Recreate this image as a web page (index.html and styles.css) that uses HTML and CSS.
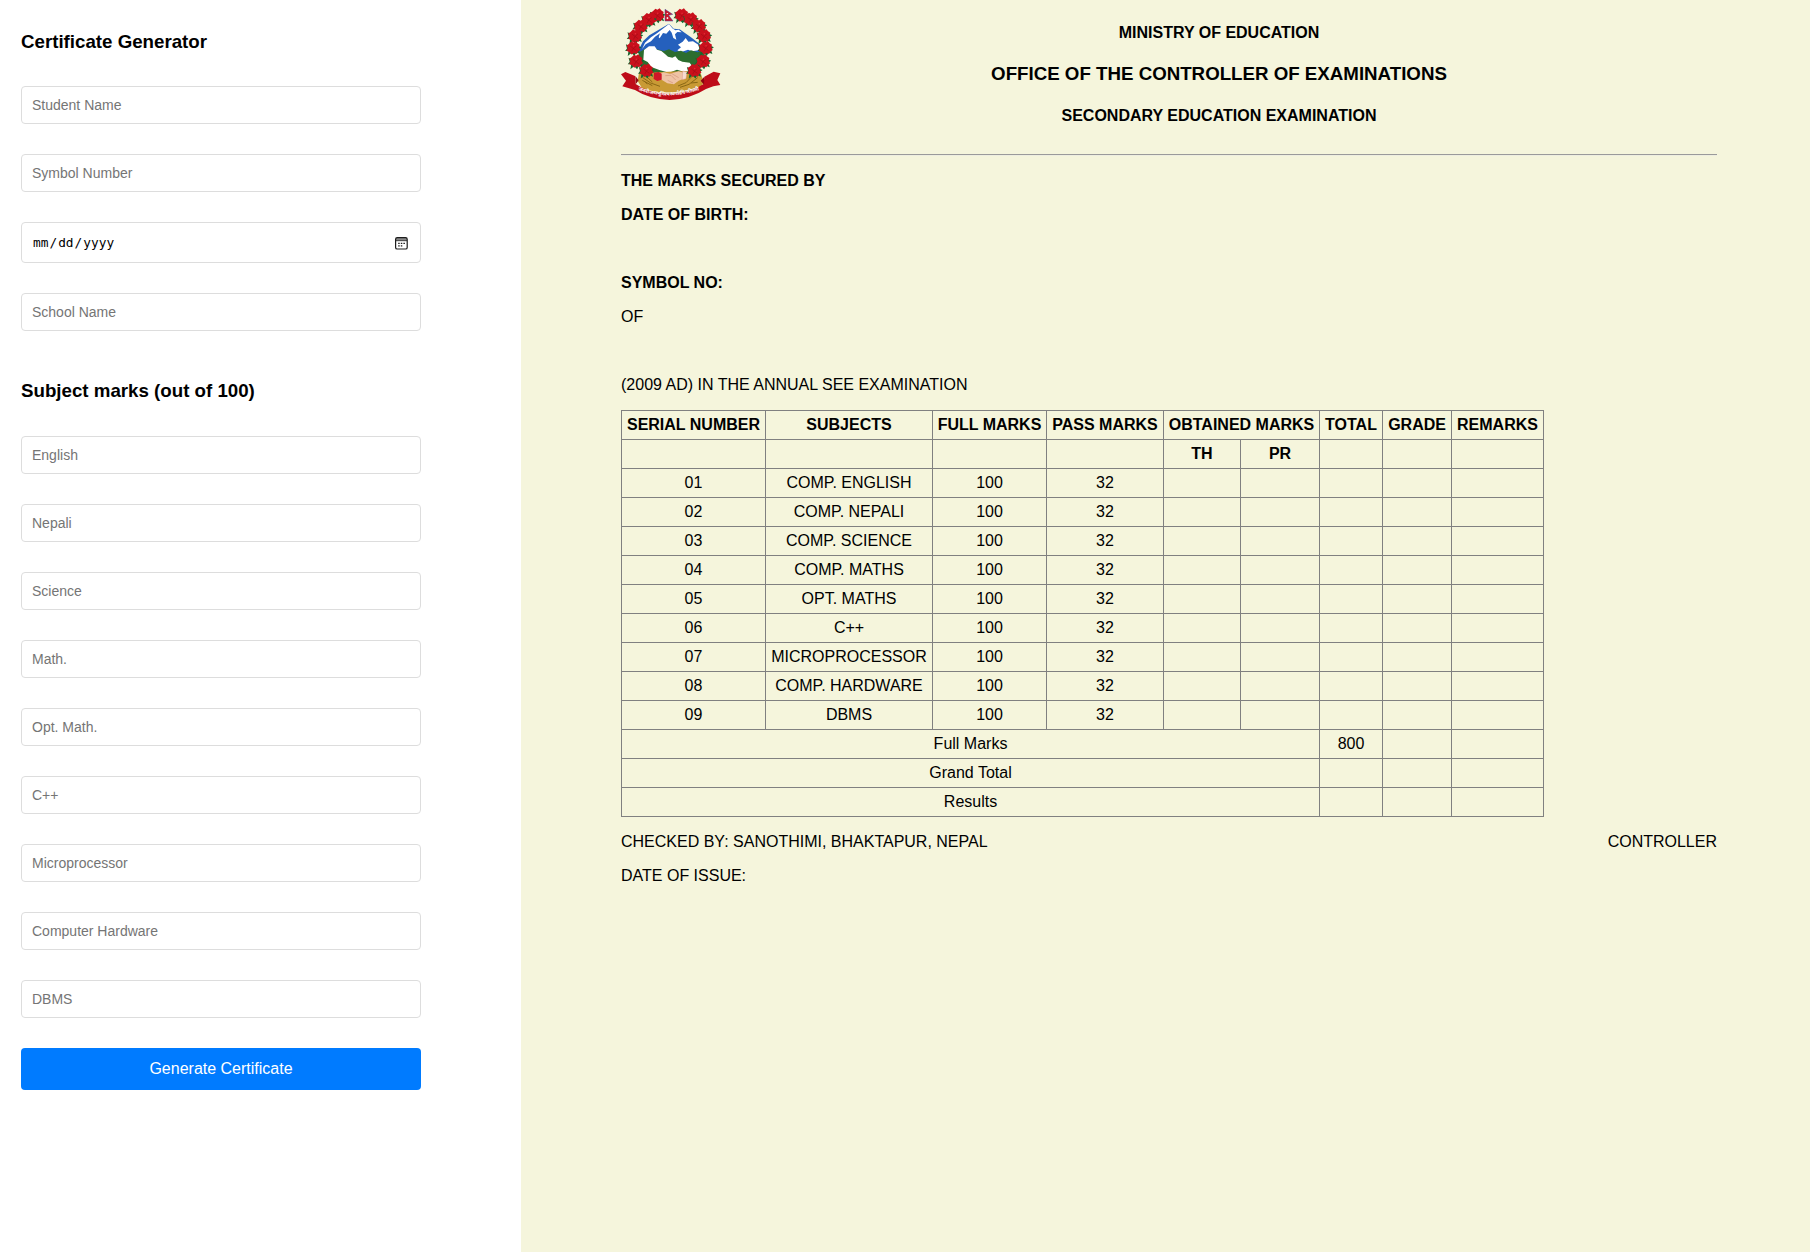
FILE: index.html
```html
<!DOCTYPE html>
<html lang="en">
<head>
<meta charset="utf-8">
<title>Certificate Generator</title>
<link rel="stylesheet" href="styles.css">
</head>
<body>
<div class="page">
  <form class="form">
    <h3>Certificate Generator</h3>
    <div class="fields">
      <input type="text" placeholder="Student Name">
      <input type="text" placeholder="Symbol Number">
      <div class="date-field">
        <input type="date" class="date">
        <svg class="calendar" viewBox="0 0 13 13" aria-hidden="true">
          <path fill="#888" d="M1 1H12V3.6H1Z"/>
          <rect x=".6" y=".6" width="11.6" height="11.4" rx="1.6" fill="none" stroke="#1c1c1c" stroke-width="1.2"/>
          <path stroke="#1c1c1c" stroke-width=".8" d="M1 3.7H12"/>
          <path fill="#1c1c1c" d="M3.2 5.7H4.7V7.1H3.2ZM5.8 5.7H7.3V7.1H5.8ZM8.4 5.7H9.9V7.1H8.4ZM3.2 8.2H4.7V9.6H3.2ZM5.8 8.2H7.3V9.6H5.8Z"/>
        </svg>
      </div>
      <input type="text" placeholder="School Name">
    </div>
    <h3 class="subjects-title">Subject marks (out of 100)</h3>
    <div class="fields">
      <input type="text" placeholder="English">
      <input type="text" placeholder="Nepali">
      <input type="text" placeholder="Science">
      <input type="text" placeholder="Math.">
      <input type="text" placeholder="Opt. Math.">
      <input type="text" placeholder="C++">
      <input type="text" placeholder="Microprocessor">
      <input type="text" placeholder="Computer Hardware">
      <input type="text" placeholder="DBMS">
      <button type="button">Generate Certificate</button>
    </div>
  </form>
  <main class="certificate">
    <header class="head">
      <svg class="emblem" viewBox="34 22 300 276" aria-label="Emblem of Nepal">
        <defs>
          <g id="flower">
            <g transform="scale(1.12)">
              <path fill="#17652f" d="M-9-4-20-9-17 2-22 9-13 9-15 22-5 14 3 22 8 13 18 17 14 5 22-1 13-5Z"/>
              <path fill="#c9101c" d="M-5-17 0-14 6-18 11-12 17-8 15-1 19 6 13 10 9 17 2 14-5 18-10 12-18 8-15 1-18-6-12-10Z"/>
              <path fill="none" stroke="#9c0a16" stroke-width="1.5" d="M-8-4 0 2 8-5M0 2-4 10M0 2 8 8"/>
              <circle r="2" cx="1" cy="-5" fill="#e22c37"/>
            </g>
          </g>
          <path id="motto" d="M86 269Q178 302 280 264"/>
        </defs>
        <path fill="#2560bd" d="M86 150 100 122 119 104 146 88 178 69 192 84 210 86 246 111 270 130 282 160 260 190H100Z"/>
        <path fill="#fff" d="M178 70 188 83 197 89 207 87 216 95 203 94 196 101 200 117 191 112 186 96 180 88 170 99 160 97 150 113 147 110 151 98 136 108 124 122 108 131 97 146 106 126 124 110 144 96ZM205 132 219 123 228 112 236 123 250 122 266 132 272 148 247 152 235 147 213 155 203 149 214 140Z"/>
        <path fill="#2c6d2f" d="M88 155 116 140 137 145 163 151 178 146 196 154 214 150 229 157 244 149 264 155 284 145 286 176 271 205 243 219 120 222 98 208 85 181Z"/>
        <path fill="#fff" d="M103 148 118 137 135 137 142 147 155 151 166 160 175 168 188 171 197 167 206 178 218 183 240 186 251 201 246 218 224 214 202 207 178 216 149 208 125 199 114 184 101 177Z"/>
        <path fill="#c99a35" d="M88 216Q118 220 139 215L229 211 272 215 282 243 272 266 180 288 100 267 84 241Z"/>
        <path fill="none" stroke="#8a6815" stroke-width="3" d="M98 230 123 247 151 257M98 239 128 255M112 229 128 244M248 226 229 246 205 256M264 231 238 251 211 260M244 247 264 245M113 250 105 243"/>
        <path fill="#efc3a5" d="M144 220 162 215 181 219 207 212 224 217 226 233 207 240 193 251 173 248 157 238 143 237Z"/>
        <path fill="none" stroke="#cb866e" stroke-width="1.6" d="M167 225 184 224 198 238M174 239 190 247M185 218 207 231"/>
        <path fill="#cf1727" d="M133 216 147 214 156 219 156 237 143 241 132 235Z"/>
        <path fill="#f6dcd0" stroke="#d6827f" d="M219 211 232 214 229 234 218 237Z"/>
        <path fill="#be0c19" d="M34 221 47 214 76 226 78 250Q113 276 180 280 248 274 282 250L284 228 312 213 332 218 323 238 332 253 311 257 289 265Q242 295 180 298 118 295 76 268L38 257 49 240Z"/>
        <path fill="#8d0510" d="M77 226 87 239 78 251ZM284 228 273 240 283 252Z"/>
        <path fill="#c91a2c" stroke="#3a4a9c" stroke-width="1.5" d="M166 26 189 41 177 44 190 61H166Z"/>
        <path fill="#fff" d="M170 37H176L173 41ZM170 52 173 49 177 52 173 56Z"/>
        <use href="#flower" x="143" y="43"/>
        <use href="#flower" x="117" y="56"/>
        <use href="#flower" x="93" y="76"/>
        <use href="#flower" x="76" y="105"/>
        <use href="#flower" x="71" y="141"/>
        <use href="#flower" x="79" y="181"/>
        <use href="#flower" x="110" y="209"/>
        <use href="#flower" x="216" y="43"/>
        <use href="#flower" x="243" y="55"/>
        <use href="#flower" x="268" y="75"/>
        <use href="#flower" x="283" y="105"/>
        <use href="#flower" x="288" y="141"/>
        <use href="#flower" x="280" y="181"/>
        <use href="#flower" x="254" y="209"/>
        <text class="motto"><textPath href="#motto" textLength="186">जननी जन्मभूमिश्च स्वर्गादपि गरीयसी</textPath></text>
      </svg>
      <div class="titles">
        <h4>MINISTRY OF EDUCATION</h4>
        <h3>OFFICE OF THE CONTROLLER OF EXAMINATIONS</h3>
        <h4>SECONDARY EDUCATION EXAMINATION</h4>
      </div>
    </header>
    <hr>
    <section class="details">
      <p><b>THE MARKS SECURED BY</b></p>
      <p><b>DATE OF BIRTH:</b></p>
      <p></p>
      <p><b>SYMBOL NO:</b></p>
      <p>OF</p>
      <p></p>
      <p>(2009 AD) IN THE ANNUAL SEE EXAMINATION</p>
    </section>
    <table>
      <colgroup><col class="c-serial"><col class="c-subject"><col class="c-full"><col class="c-pass"><col class="c-th"><col class="c-pr"><col class="c-total"><col class="c-grade"><col class="c-remarks"></colgroup>
      <tr><th>SERIAL NUMBER</th><th>SUBJECTS</th><th>FULL MARKS</th><th>PASS MARKS</th><th colspan="2">OBTAINED MARKS</th><th>TOTAL</th><th>GRADE</th><th>REMARKS</th></tr>
      <tr><th></th><th></th><th></th><th></th><th>TH</th><th>PR</th><th></th><th></th><th></th></tr>
      <tr><td>01</td><td>COMP. ENGLISH</td><td>100</td><td>32</td><td></td><td></td><td></td><td></td><td></td></tr>
      <tr><td>02</td><td>COMP. NEPALI</td><td>100</td><td>32</td><td></td><td></td><td></td><td></td><td></td></tr>
      <tr><td>03</td><td>COMP. SCIENCE</td><td>100</td><td>32</td><td></td><td></td><td></td><td></td><td></td></tr>
      <tr><td>04</td><td>COMP. MATHS</td><td>100</td><td>32</td><td></td><td></td><td></td><td></td><td></td></tr>
      <tr><td>05</td><td>OPT. MATHS</td><td>100</td><td>32</td><td></td><td></td><td></td><td></td><td></td></tr>
      <tr><td>06</td><td>C++</td><td>100</td><td>32</td><td></td><td></td><td></td><td></td><td></td></tr>
      <tr><td>07</td><td>MICROPROCESSOR</td><td>100</td><td>32</td><td></td><td></td><td></td><td></td><td></td></tr>
      <tr><td>08</td><td>COMP. HARDWARE</td><td>100</td><td>32</td><td></td><td></td><td></td><td></td><td></td></tr>
      <tr><td>09</td><td>DBMS</td><td>100</td><td>32</td><td></td><td></td><td></td><td></td><td></td></tr>
      <tr><td colspan="6">Full Marks</td><td>800</td><td></td><td></td></tr>
      <tr><td colspan="6">Grand Total</td><td></td><td></td><td></td></tr>
      <tr><td colspan="6">Results</td><td></td><td></td><td></td></tr>
    </table>
    <footer class="sign">
      <p>CHECKED BY: SANOTHIMI, BHAKTAPUR, NEPAL</p>
      <p>CONTROLLER</p>
    </footer>
    <p>DATE OF ISSUE:</p>
  </main>
</div>
</body>
</html>
```
FILE: styles.css
```css
* { box-sizing: border-box; }

body {
  margin: 0;
  background: #fff;
  color: #000;
  font: 16px/18px "Liberation Sans", Arial, sans-serif;
}

.page { display: flex; height: 1252px; }

.form { width: 521px; padding: 31px 100px 0 21px; }

h3, h4, p { margin: 0; }
h3 { font-size: 18.72px; line-height: 21px; }
h4 { font-size: 16px; line-height: 18px; }

.fields { display: flex; flex-direction: column; gap: 30px; margin-top: 34px; }
.subjects-title { margin-top: 49px; }
.subjects-title + .fields { margin-top: 35px; }

input {
  display: block;
  width: 100%;
  height: 38px;
  margin: 0;
  padding: 10px;
  border: 1px solid #ddd;
  border-radius: 4px;
  background: #fff;
  color: #000;
  font: 14px "Liberation Sans", Arial, sans-serif;
}
input::placeholder { color: #757575; }

.date-field { position: relative; }
.date { height: 41px; font: 12.8px "DejaVu Sans Mono", monospace; }
.date::-webkit-calendar-picker-indicator { opacity: 0; }
.calendar { position: absolute; top: 15px; right: 13px; width: 13px; height: 13px; pointer-events: none; }

button {
  height: 42px;
  padding: 0;
  border: 0;
  border-radius: 4px;
  background: #007bff;
  color: #fff;
  font: 16px "Liberation Sans", Arial, sans-serif;
}

.certificate { flex: 1; padding: 8px 93px 0 100px; background: #f5f5dc; }

.head { display: flex; height: 146px; }
.emblem { width: 100px; height: 92px; flex: none; }
.titles { flex: 1; display: flex; flex-direction: column; padding-top: 16px; text-align: center; }
.titles h3 { margin: 21px 0 23px; }
.motto { fill: #fff; font: bold 15px "Noto Sans", sans-serif; }

hr { height: 2px; margin: 0 0 16px; border: 0; border-top: 1px solid #9a9a9a; border-bottom: 1px solid #eeeee0; }

.details p { height: 18px; margin-bottom: 16px; }

table { width: 923px; table-layout: fixed; border-collapse: collapse; }
th, td { height: 29px; padding: 0; border: 1px solid #808080; text-align: center; white-space: nowrap; }
.c-serial { width: 144px; }
.c-subject { width: 167px; }
.c-full { width: 114px; }
.c-pass { width: 117px; }
.c-th { width: 77px; }
.c-pr { width: 79px; }
.c-total { width: 63px; }
.c-grade { width: 69px; }
.c-remarks { width: 92px; }

.sign { display: flex; justify-content: space-between; margin: 16px 0; }
```
